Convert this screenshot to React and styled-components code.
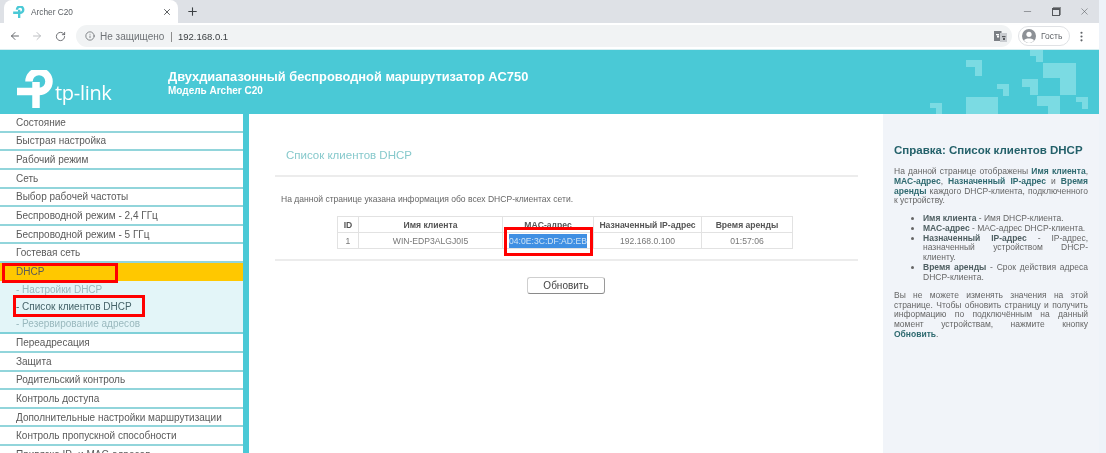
import React from 'react';
import styled, { createGlobalStyle } from 'styled-components';
import { ArrowLeft, ArrowRight, RotateCw, Info, MoreVertical, X, Plus, Minus } from 'lucide-react';

const Global = createGlobalStyle`
  html, body { margin: 0; padding: 0; background: #eef3f9; overflow: hidden; }
  body { font-family: "Liberation Sans", Arial, sans-serif; }
  * { box-sizing: border-box; }
`;

const Page = styled.div`
  width: 1106px; height: 453px; display: flex; overflow: hidden; background: #eef3f9;
  filter: blur(0.4px);
`;
const Win = styled.div`
  width: 1099px; height: 453px; display: flex; flex-direction: column; background: #fff; overflow: hidden;
`;
const TabBar = styled.div`
  height: 23px; flex: none; background: #dee1e6; display: flex; align-items: flex-end; color: #3c4043;
`;
const Tab = styled.div`
  width: 174px; height: 23px; margin-left: 4px; background: #fff; border-radius: 8px 8px 0 0;
  display: flex; align-items: center; padding: 0 6px 0 9px; gap: 6px;
  font-size: 8.3px; color: #5a5f64; flex: none;
`;
const TabTitle = styled.span` flex: 1; `;
const NewTab = styled.div`
  width: 28px; height: 23px; display: flex; align-items: center; justify-content: center; margin-left: 0;
`;
const WinControls = styled.div`
  margin-left: auto; height: 23px; display: flex; align-items: center; gap: 19px; padding-right: 9px; color: #55585c;
`;
const RestoreIcon = styled.span`
  width: 8px; height: 8px; border: 1.5px solid #55585c; border-top-width: 2px; display: block;
  box-shadow: 1px -1px 0 0 #8a8d90;
`;
const Toolbar = styled.div`
  height: 27px; flex: none; background: #fff; display: flex; align-items: center; padding: 0 10px 0 9px;
  color: #55585c; border-bottom: 1px solid #d5eef1;
`;
const NavBtns = styled.div` display: flex; gap: 10px; align-items: center; width: 67px; flex: none; `;
const Omni = styled.div`
  width: 936px; height: 22px; border-radius: 11px; background: #f1f3f4; display: flex; align-items: center;
  padding: 0 4px 0 9px; font-size: 10px; color: #5f6368; flex: none;
`;
const Secure = styled.span` margin-left: 5px; color: #6f7377; `;
const Pipe = styled.span` margin: 0 5px 0 6px; color: #777; `;
const Url = styled.span` color: #3c4043; font-size: 9.5px; `;
const TranslateBtn = styled.div` margin-left: auto; display: flex; `;
const Profile = styled.div`
  margin-left: 6px; width: 52px; height: 20px; border: 1px solid #e0e2e5; border-radius: 10px; flex: none;
  display: flex; align-items: center; gap: 5px; padding: 0 3px; font-size: 8.5px; color: #5f6368;
`;
const Dots = styled.div` margin-left: 5px; display: flex; color: #5f6368; `;

const Header = styled.header`
  position: relative; height: 64px; flex: none; background: #4ac9d6; display: flex; align-items: center; padding: 0 0 0 17px; overflow: hidden;
`;
const Logo = styled.div` display: flex; align-items: flex-end; width: 151px; flex: none; color: #fff; margin-top: 13px; `;
const LogoText = styled.span`
  font-family: "Open Sans", sans-serif; font-size: 20px; line-height: 20px; color: #fff; margin-left: 1px; margin-bottom: 5px; letter-spacing: -0.3px;
`;
const HeadText = styled.div` color: #fff; font-weight: bold; margin-top: 2px; `;
const HeadTitle = styled.div` font-size: 12.85px; line-height: 14px; `;
const HeadModel = styled.div` font-size: 10px; line-height: 13px; `;
const Deco = styled.svg` position: absolute; left: 0; top: 0; `;

const Body = styled.div` flex: 1; display: flex; min-height: 0; `;
const Side = styled.nav`
  width: 243px; flex: none; background: #fff; display: flex; flex-direction: column;
`;
const Item = styled.div`
  height: 18.65px; flex: none; position: relative; padding-left: 16px; display: flex; align-items: center;
  font-size: 10px; color: #5a5a5a; background: #fff;
  border-bottom: 2px solid #92d5db;
`;
const ActiveItem = styled(Item)`
  height: 17.5px; background: #ffc800; border-bottom: 0;
`;
const SubMenu = styled.div`
  background: #e3f5f8; height: 53.65px; flex: none; display: flex; flex-direction: column;
  border-bottom: 2px solid #7fd0d8;
`;
const SubItem = styled.div`
  position: relative; height: 17.3px; flex: none; padding-left: 16px; display: flex; align-items: center;
  font-size: 10px; color: ${p => p.$on ? '#46646a' : '#9ab9be'};
`;
const Mark = styled.span`
  position: absolute; border: 3px solid #f00; pointer-events: none;
  left: ${p => p.$l}px; top: ${p => p.$t}px; width: ${p => p.$w}px; height: ${p => p.$h}px;
`;
const Strip = styled.div` width: 6px; flex: none; background: #4ac9d6; `;
const Main = styled.main`
  width: 634px; flex: none; background: #fff; padding: 33px 25px 0 26px;
  font-size: 8.6px; color: #5a5a5a;
`;
const PageTitle = styled.h1`
  margin: 0 0 0 11px; font-weight: normal; font-size: 11.5px; line-height: 16px; color: #87c9cc;
`;
const Rule = styled.hr`
  margin: ${p => p.$m}; border: 0; height: 2px; background: #ececec;
`;
const Lead = styled.p` margin: 17px 0 0 6px; line-height: 11px; font-size: 8.56px; color: #666; `;
const Table = styled.table`
  margin: 11px 0 0 62px; border-collapse: collapse; table-layout: fixed; width: 455px; font-size: 8.6px; color: #777;
  th, td { border: 1px solid #e2e2e2; height: 16px; padding: 0; text-align: center; position: relative; }
  th { font-weight: bold; color: #555; }
`;
const Sel = styled.span`
  background: #3f8fe3; color: #cfe4f7; display: inline-block; height: 14px; line-height: 14px; padding: 0 0.5px;
`;
const BtnRow = styled.div` margin: 16px 0 0 252px; `;
const Btn = styled.button`
  display: block; width: 78px; height: 17px; background: #fff; border: 1px solid #cfcfcf; border-right-color: #9a9a9a; border-bottom-color: #8a8a8a;
  border-radius: 3px; font: 10px "Liberation Sans", sans-serif; color: #444; padding: 0;
`;
const Help = styled.aside`
  flex: 1; background: #f1f4f9; padding: 29px 11px 0 11px; font-size: 8.5px; line-height: 9.75px; color: #666;
  text-align: justify;
  b { color: #2f6a70; }
`;
const HelpTitle = styled.h2`
  margin: 0 0 10px; font-size: 11.5px; line-height: 14px; color: #24616a; font-weight: bold; text-align: left;
`;
const HelpP = styled.p` margin: 0; `;
const HelpList = styled.ul`
  margin: 8px 0 8.5px; padding: 0 0 0 29px;
  b { color: #4f5f62; }
`;

const Mark2 = ({ w, h, c }) => (
  <svg width={w} height={h} viewBox="0 0 37 38" fill="none" stroke={c} strokeWidth="7.5">
    <path d="M0 21.5H22A10 10 0 1 0 12 11.5" />
    <path d="M19 12V38" />
  </svg>
);

const TranslateIcon = () => (
  <svg width="15" height="15" viewBox="0 0 15 15">
    <rect x="1" y="2" width="7.5" height="10" fill="#7b7f84" />
    <rect x="7" y="4" width="7" height="9" fill="#c8cbcf" />
    <rect x="3" y="5" width="3" height="1.2" fill="#fff" />
    <rect x="4" y="6.5" width="2" height="2" fill="#fff" />
    <rect x="9" y="7" width="3.5" height="1.2" fill="#55585c" />
    <rect x="10" y="9" width="2" height="2" fill="#55585c" />
  </svg>
);
const Avatar = () => (
  <svg width="14" height="14" viewBox="0 0 14 14">
    <circle cx="7" cy="7" r="7" fill="#8d9196" />
    <circle cx="7" cy="5.3" r="2.6" fill="#fff" />
    <path d="M2 11.2C3 8.9 11 8.9 12 11.2A6 6 0 0 1 2 11.2Z" fill="#fff" />
  </svg>
);

const SHAPES = [
  '966,10 982,10 982,26 975,26 975,17 966,17',
  '1030,0 1043,0 1043,12 1036,12 1036,6 1030,6',
  '1043,13 1076,13 1076,45 1060,45 1060,28 1043,28',
  '1022,29 1038,29 1038,45 1030,45 1030,37 1022,37',
  '997,34 1009,34 1009,46 1003,46 1003,39 997,39',
  '1037,46 1060,46 1060,64 1048,64 1048,56 1037,56',
  '1076,47 1088,47 1088,59 1082,59 1082,52 1076,52',
  '966,47 998,47 998,64 966,64',
  '930,53 942,53 942,64 936,64 936,58 930,58',
];

const top = ['Состояние', 'Быстрая настройка', 'Рабочий режим', 'Сеть', 'Выбор рабочей частоты', 'Беспроводной режим - 2,4 ГГц', 'Беспроводной режим - 5 ГГц', 'Гостевая сеть'];
const bottom = ['Переадресация', 'Защита', 'Родительский контроль', 'Контроль доступа', 'Дополнительные настройки маршрутизации', 'Контроль пропускной способности', 'Привязка IP- и MAC-адресов'];

export default function App() {
  return (
    <Page>
      <Global />
      <Win>
        <TabBar>
          <Tab>
            <Mark2 w={12} h={12} c="#4ac9d6" />
            <TabTitle>Archer C20</TabTitle>
            <X size={10} strokeWidth={2} color="#3c4043" />
          </Tab>
          <NewTab><Plus size={13} strokeWidth={2} /></NewTab>
          <WinControls>
            <Minus size={11} strokeWidth={1.2} />
            <RestoreIcon />
            <X size={11} strokeWidth={1.2} />
          </WinControls>
        </TabBar>
        <Toolbar>
          <NavBtns>
            <ArrowLeft size={12} strokeWidth={1.8} />
            <ArrowRight size={12} strokeWidth={1.8} color="#b5b8bb" />
            <RotateCw size={11} strokeWidth={1.8} style={{ marginLeft: 2 }} />
          </NavBtns>
          <Omni>
            <Info size={10} strokeWidth={1.8} />
            <Secure>Не защищено</Secure>
            <Pipe>|</Pipe>
            <Url>192.168.0.1</Url>
            <TranslateBtn><TranslateIcon /></TranslateBtn>
          </Omni>
          <Profile><Avatar />Гость</Profile>
          <Dots><MoreVertical size={13} strokeWidth={2} /></Dots>
        </Toolbar>
        <Header>
          <Logo>
            <Mark2 w={37} h={38} c="#fff" />
            <LogoText>tp-link</LogoText>
          </Logo>
          <HeadText>
            <HeadTitle>Двухдиапазонный беспроводной маршрутизатор AC750</HeadTitle>
            <HeadModel>Модель Archer C20</HeadModel>
          </HeadText>
          <Deco width="1099" height="64" viewBox="0 0 1099 64">
            {SHAPES.map(s => <polygon key={s} points={s} fill="#7bdbe3" />)}
          </Deco>
        </Header>
        <Body>
          <Side>
            {top.map(t => <Item key={t}>{t}</Item>)}
            <ActiveItem>DHCP<Mark $l={2} $t={0} $w={116} $h={20} /></ActiveItem>
            <SubMenu>
              <SubItem>- Настройки DHCP</SubItem>
              <SubItem $on>- Список клиентов DHCP<Mark $l={13} $t={-3} $w={132} $h={22} /></SubItem>
              <SubItem>- Резервирование адресов</SubItem>
            </SubMenu>
            {bottom.map(t => <Item key={t}>{t}</Item>)}
          </Side>
          <Strip />
          <Main>
            <PageTitle>Список клиентов DHCP</PageTitle>
            <Rule $m="12px 0 0" />
            <Lead>На данной странице указана информация обо всех DHCP-клиентах сети.</Lead>
            <Table>
              <colgroup>
                <col style={{ width: 21 }} />
                <col style={{ width: 144 }} />
                <col style={{ width: 91 }} />
                <col style={{ width: 108 }} />
                <col style={{ width: 91 }} />
              </colgroup>
              <thead>
                <tr><th>ID</th><th>Имя клиента</th><th>MAC-адрес</th><th>Назначенный IP-адрес</th><th>Время аренды</th></tr>
              </thead>
              <tbody>
                <tr>
                  <td>1</td>
                  <td>WIN-EDP3ALGJ0I5</td>
                  <td><Sel>04:0E:3C:DF:AD:EB</Sel><Mark $l={1} $t={-6} $w={89} $h={29} /></td>
                  <td>192.168.0.100</td>
                  <td>01:57:06</td>
                </tr>
              </tbody>
            </Table>
            <Rule $m="10px 0 0" />
            <BtnRow><Btn>Обновить</Btn></BtnRow>
          </Main>
          <Help>
            <HelpTitle>Справка: Список клиентов DHCP</HelpTitle>
            <HelpP>На данной странице отображены <b>Имя клиента</b>, <b>МАС-адрес</b>, <b>Назначенный IP-адрес</b> и <b>Время аренды</b> каждого DHCP-клиента, подключенного к устройству.</HelpP>
            <HelpList>
              <li><b>Имя клиента</b> - Имя DHCP-клиента.</li>
              <li><b>МАС-адрес</b> - МАС-адрес DHCP-клиента.</li>
              <li><b>Назначенный IP-адрес</b> - IP-адрес, назначенный устройством DHCP-клиенту.</li>
              <li><b>Время аренды</b> - Срок действия адреса DHCP-клиента.</li>
            </HelpList>
            <HelpP>Вы не можете изменять значения на этой странице. Чтобы обновить страницу и получить информацию по подключённым на данный момент устройствам, нажмите кнопку <b>Обновить</b>.</HelpP>
          </Help>
        </Body>
      </Win>
    </Page>
  );
}
